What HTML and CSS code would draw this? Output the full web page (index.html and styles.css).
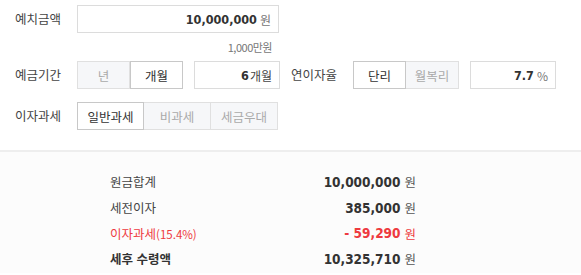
FILE: index.html
```html
<!DOCTYPE html>
<html lang="ko">
<head>
<meta charset="utf-8">
<link rel="stylesheet" href="styles.css">
</head>
<body>
<div class="form">
  <div class="row">
    <div class="label">예치금액</div>
    <div class="box box-wide"><b class="num">10,000,000</b><span class="unit">원</span></div>
  </div>
  <div class="hint-row"><span class="hint">1,000만원</span></div>
  <div class="row row-2">
    <div class="label">예금기간</div>
    <div class="seg">
      <span class="btn off w53">년</span><span class="btn on w53">개월</span>
    </div>
    <div class="box box-small"><b class="num">6</b><span class="unit dark">개월</span></div>
    <div class="label label-2">연이자율</div>
    <div class="seg">
      <span class="btn on w53">단리</span><span class="btn off w53">월복리</span>
    </div>
    <div class="box box-small"><b class="num">7.7</b><span class="unit">%</span></div>
  </div>
  <div class="row row-3">
    <div class="label">이자과세</div>
    <div class="seg">
      <span class="btn on w67">일반과세</span><span class="btn off w67">비과세</span><span class="btn off w67">세금우대</span>
    </div>
  </div>
</div>
<div class="result">
  <div class="res-list">
    <div class="res-row"><span class="res-label">원금합계</span><span class="res-val"><b class="rnum">10,000,000</b><span class="runit">원</span></span></div>
    <div class="res-row"><span class="res-label">세전이자</span><span class="res-val"><b class="rnum">385,000</b><span class="runit">원</span></span></div>
    <div class="res-row red"><span class="res-label">이자과세<span class="pct">(15.4%)</span></span><span class="res-val"><b class="rnum">- 59,290</b><span class="runit">원</span></span></div>
    <div class="res-row total"><span class="res-label">세후 수령액</span><span class="res-val"><b class="rnum">10,325,710</b><span class="runit">원</span></span></div>
  </div>
</div>
</body>
</html>
```
FILE: styles.css
```css
html, body {
  margin: 0;
  padding: 0;
  background: #fff;
}
body {
  width: 581px;
  height: 275px;
  overflow: hidden;
  font-family: "Noto Sans CJK KR", "Noto Sans", sans-serif;
  color: #333;
}
.form {
  padding: 5px 0 0 15px;
  height: 150px;
  box-sizing: border-box;
}
.row {
  display: flex;
  align-items: center;
  height: 28px;
}
.row-3 {
  margin-top: 13px;
}
.label {
  width: 62px;
  font-size: 12.5px;
  color: #444;
  line-height: 28px;
}
.label-2 {
  margin-left: 11px;
}
.box {
  box-sizing: border-box;
  height: 28px;
  border: 1px solid #dcdcdc;
  background: #fff;
  display: flex;
  align-items: center;
  justify-content: flex-end;
  padding-right: 7px;
}
.box-wide {
  width: 202px;
}
.box-small {
  width: 86px;
  margin-left: 11px;
}
.num {
  font-family: "DejaVu Sans Condensed", "DejaVu Sans", sans-serif;
  font-stretch: condensed;
  font-weight: bold;
  font-size: 12.5px;
  color: #333;
}
.unit {
  font-size: 12px;
  color: #777;
  margin-left: 3px;
}
.unit.dark {
  color: #444;
  margin-left: 1px;
}
.hint-row {
  width: 257px;
  height: 28px;
  display: flex;
  justify-content: flex-end;
  align-items: center;
}
.hint {
  font-size: 11px;
  color: #777;
  letter-spacing: -0.5px;
}
.seg {
  display: flex;
  height: 28px;
}
.btn {
  box-sizing: border-box;
  height: 28px;
  border: 1px solid #d4d4d4;
  display: flex;
  align-items: center;
  justify-content: center;
  font-size: 12.5px;
}
.btn + .btn {
  border-left: none;
}
.btn.off {
  background: #f6f7f9;
  color: #aaa;
  border-color: #e0e0e0;
}
.btn.on {
  background: #fff;
  color: #333;
  border-color: #c8c8c8;
}
.btn.on + .btn.off {
  border-left: none;
}
.btn.off + .btn.on {
  border-left: 1px solid #c8c8c8;
}
.w53 { width: 53px; }
.w67 { width: 67px; }
.result {
  border-top: 2px solid #eeeeee;
  background: #fcfcfc;
  height: 123px;
  box-sizing: border-box;
  padding-top: 17px;
}
.res-list {
  margin-left: 110px;
  width: 306px;
}
.res-row {
  display: flex;
  justify-content: space-between;
  align-items: center;
  height: 25.7px;
}
.res-label {
  font-size: 12.5px;
  color: #444;
}
.pct {
  font-size: 11.5px;
}
.res-val {
  display: flex;
  align-items: center;
}
.rnum {
  font-family: "DejaVu Sans Condensed", "DejaVu Sans", sans-serif;
  font-stretch: condensed;
  font-weight: bold;
  font-size: 13.5px;
  color: #333;
}
.runit {
  font-size: 12.5px;
  color: #555;
  margin-left: 4px;
}
.red .res-label,
.red .rnum {
  color: #ee3a3f;
}
.red .runit {
  color: #ee3a3f;
}
.total .res-label {
  font-weight: bold;
  color: #333;
}
```
